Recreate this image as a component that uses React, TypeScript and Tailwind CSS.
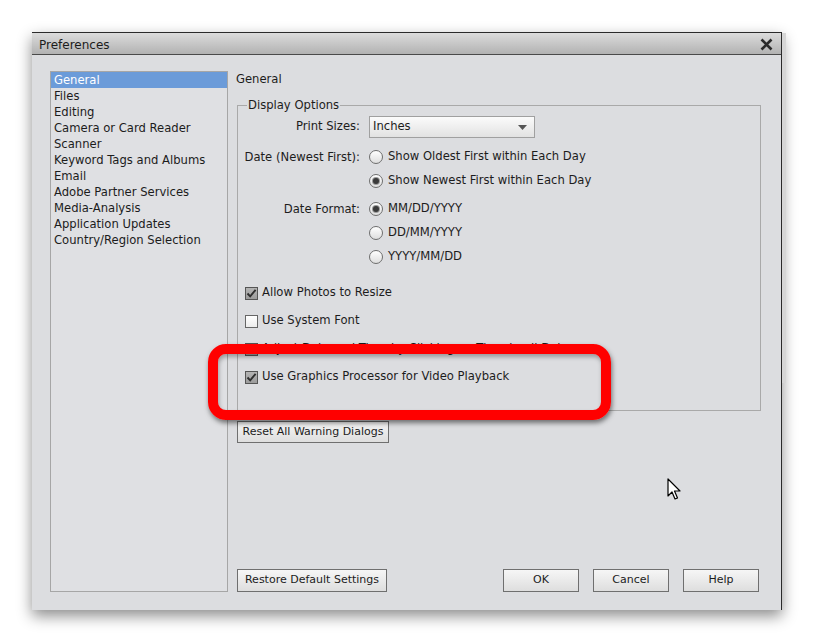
import React from 'react';

const categories = [
  'General',
  'Files',
  'Editing',
  'Camera or Card Reader',
  'Scanner',
  'Keyword Tags and Albums',
  'Email',
  'Adobe Partner Services',
  'Media-Analysis',
  'Application Updates',
  'Country/Region Selection',
];

function Radio({ checked, label }: { checked?: boolean; label: string }) {
  return (
    <div className="h-[24px] flex items-center gap-[5px]">
      <span className="w-[14px] h-[14px] rounded-full border border-[#6e6e6e] bg-linear-to-b from-[#ffffff] to-[#dedede] flex items-center justify-center">
        {checked && <span className="w-[6px] h-[6px] rounded-full bg-[#3a3a3a] shadow-[0_0_0_1px_#9a9a9a]" />}
      </span>
      <span>{label}</span>
    </div>
  );
}

function Check({ checked, label }: { checked?: boolean; label: string }) {
  return (
    <div className="h-[28px] flex items-center gap-[4px] pl-[7px]">
      <span
        className={
          checked
            ? 'w-[13px] h-[13px] border border-[#555] bg-linear-to-b from-[#b4b4b4] to-[#9c9c9c] flex items-center justify-center'
            : 'w-[13px] h-[13px] border border-[#666] bg-linear-to-b from-[#ffffff] to-[#ececec]'
        }
      >
        {checked && (
          <svg width="11" height="11" viewBox="0 0 11 11">
            <path d="M1.5 5.5 L4.2 8.3 L9.6 1.8" fill="none" stroke="#2e2e2e" strokeWidth="1.9" />
          </svg>
        )}
      </span>
      <span>{label}</span>
    </div>
  );
}

function Button({ children, className }: { children: React.ReactNode; className: string }) {
  return (
    <div
      className={
        'flex items-center justify-center text-[11px] border border-[#6f6f6f] bg-linear-to-b from-[#f6f6f6] to-[#dedede] ' +
        className
      }
    >
      {children}
    </div>
  );
}

export default function App() {
  return (
    <div className="relative w-[819px] h-[642px] bg-white overflow-hidden pt-[32px] pl-[32px] font-['DejaVu_Sans',sans-serif] text-[11.6px] text-[#1c1c1c]">
      <div className="w-[750px] h-[578px] flex flex-col bg-[#dcdde0] border-t border-r border-[#2b2b2b] shadow-[0_6px_14px_rgba(0,0,0,0.45)]">
        <div className="h-[22px] shrink-0 flex items-center justify-between pl-[7px] pr-[8px] pt-[2px] border-b border-[#4a4a4a] bg-linear-to-b from-[#dcdcdc] to-[#b2b2b2]">
          <span className="text-[12px]">Preferences</span>
          <svg width="13" height="13" viewBox="0 0 13 13">
            <path d="M1.5 1.5 L11.5 11.5 M11.5 1.5 L1.5 11.5" stroke="#2a2a2a" strokeWidth="2.6" />
          </svg>
        </div>

        <div className="flex-1 flex gap-[8px] pl-[18px] pr-[20px] pt-[16px] pb-[18px]">
          <div className="w-[178px] shrink-0 border border-[#a6a6a6] bg-[#dfe0e3]">
            {categories.map((c, i) => (
              <div
                key={c}
                className={
                  i === 0
                    ? 'h-[16px] leading-[16px] pl-[3px] bg-[#6b9bd9] text-white'
                    : 'h-[16px] leading-[16px] pl-[3px]'
                }
              >
                {c}
              </div>
            ))}
          </div>

          <div className="flex-1 flex flex-col">
            <div className="leading-[16px]">General</div>

            <div className="relative mt-[18px] ml-[1px] border border-[#a9a9a9] pt-[10px] pb-[19px]">
              <span className="absolute -top-[9px] left-[9px] px-[1px] leading-[16px] bg-[#dcdde0]">Display Options</span>

              <div className="flex items-center h-[22px]">
                <div className="w-[122px] text-right">Print Sizes:</div>
                <div className="ml-[9px] w-[166px] h-[22px] border border-[#a0a0a0] bg-linear-to-b from-[#fbfbfb] to-[#e2e2e2] flex items-center justify-between pl-[3px] pr-[7px]">
                  <span>Inches</span>
                  <svg width="9" height="5" viewBox="0 0 9 5">
                    <path d="M0 0 H9 L4.5 5 Z" fill="#555" />
                  </svg>
                </div>
              </div>

              <div className="flex mt-[7px]">
                <div className="w-[122px] text-right leading-[24px]">Date (Newest First):</div>
                <div className="ml-[9px]">
                  <Radio label="Show Oldest First within Each Day" />
                  <Radio checked label="Show Newest First within Each Day" />
                </div>
              </div>

              <div className="flex mt-[4px]">
                <div className="w-[122px] text-right leading-[24px]">Date Format:</div>
                <div className="ml-[9px]">
                  <Radio checked label="MM/DD/YYYY" />
                  <Radio label="DD/MM/YYYY" />
                  <Radio label="YYYY/MM/DD" />
                </div>
              </div>

              <div className="mt-[10px]">
                <Check checked label="Allow Photos to Resize" />
                <Check label="Use System Font" />
                <Check checked label="Adjust Date and Time by Clicking on Thumbnail Dates" />
                <Check checked label="Use Graphics Processor for Video Playback" />
              </div>
            </div>

            <Button className="mt-[10px] ml-[1px] w-[152px] h-[22px]">Reset All Warning Dialogs</Button>

            <div className="mt-auto flex items-center">
              <Button className="ml-[1px] w-[150px] h-[23px]">Restore Default Settings</Button>
              <div className="ml-auto mr-[2px] flex gap-[14px]">
                <Button className="w-[76px] h-[23px]">OK</Button>
                <Button className="w-[76px] h-[23px]">Cancel</Button>
                <Button className="w-[76px] h-[23px]">Help</Button>
              </div>
            </div>
          </div>
        </div>
      </div>

      <div className="absolute left-[782px] top-[33px] w-[4px] h-[350px] bg-[#d6d6d6]" />

      <div className="absolute left-[208px] top-[344px] w-[403px] h-[76px] rounded-[18px] border-[10px] border-[#ff0000] shadow-[1px_3px_5px_rgba(0,0,0,0.5),inset_1px_3px_4px_rgba(0,0,0,0.3)]" />

      <svg className="absolute left-[667px] top-[478px]" width="16" height="24" viewBox="0 0 16 24">
        <path d="M1 1 L1 18 L5 14 L8 21 L10.5 20 L7.5 13 L13 13 Z" fill="#fff" stroke="#000" strokeWidth="1.2" strokeLinejoin="round" />
      </svg>
    </div>
  );
}
